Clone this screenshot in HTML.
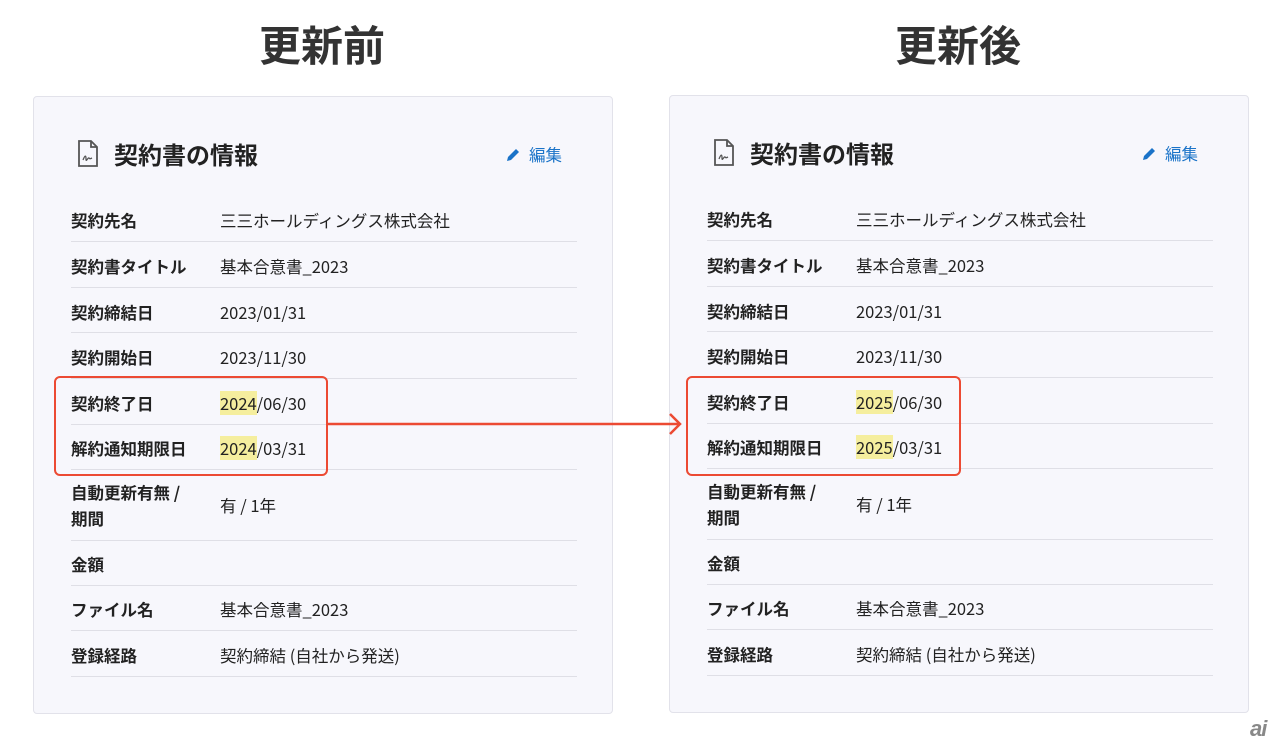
<!DOCTYPE html>
<html><head><meta charset="utf-8"><style>
*{margin:0;padding:0;box-sizing:border-box}
body{width:1280px;height:747px;background:#fff;position:relative;overflow:hidden;font-family:"Noto Sans CJK JP","Liberation Sans",sans-serif;color:#222}
.h{position:absolute;top:18px;font-size:42px;line-height:52px;font-weight:bold;color:#333;width:300px;text-align:center}
.p{position:absolute;width:580px;height:618px;background:#f7f7fc;border:1px solid #e2e2ea;border-radius:4px}
.ttl{position:absolute;left:80px;top:41px;font-size:24px;line-height:32px;font-weight:bold;color:#222}
.ico{position:absolute;left:43px;top:43px}
.ed{position:absolute;left:472px;top:46px;font-size:16.5px;line-height:22px;color:#1a73c8}
.ed svg{vertical-align:-1px;margin-right:9px}
.r{position:absolute;left:37px;width:506px;border-bottom:1px solid #dfdfe6;font-size:16.5px;line-height:22px}
.r .l{position:absolute;left:0;font-weight:bold}
.r .v{position:absolute;left:149px}
.hl{background:#f5ee9e}
.box{position:absolute;border:2px solid #ec4a33;border-radius:6px}
</style></head><body>
<div class="h" style="left:172px">更新前</div>
<div class="h" style="left:808px">更新後</div>

<div class="p" style="left:33px;top:96px">
<svg class="ico" width="22" height="28" viewBox="0 0 22 28"><path d="M2 1h12l6 6v19H2z" fill="none" stroke="#555" stroke-width="1.8"/><path d="M14 1v6h6" fill="none" stroke="#555" stroke-width="1.8"/><path d="M6 20c2-5 3-5 3-1s2-2 3-1 1 1 3 0" fill="none" stroke="#555" stroke-width="1.3"/></svg>
<div class="ttl">契約書の情報</div>
<div class="ed"><svg width="14" height="14" viewBox="0 0 14 14"><path d="M1 13l1-4 8-8 3 3-8 8z" fill="#1a73c8"/></svg>編集</div>
<div class="r" style="top:100px;height:45px"><span class="l" style="top:12px">契約先名</span><span class="v" style="top:12px">三三ホールディングス株式会社</span></div>
<div class="r" style="top:145px;height:46px"><span class="l" style="top:13px">契約書タイトル</span><span class="v" style="top:13px">基本合意書_2023</span></div>
<div class="r" style="top:191px;height:45px"><span class="l" style="top:13px">契約締結日</span><span class="v" style="top:13px">2023/01/31</span></div>
<div class="r" style="top:236px;height:46px"><span class="l" style="top:13px">契約開始日</span><span class="v" style="top:13px">2023/11/30</span></div>
<div class="r" style="top:282px;height:46px"><span class="l" style="top:13px">契約終了日</span><span class="v" style="top:13px"><span class="hl">2024</span>/06/30</span></div>
<div class="r" style="top:328px;height:45px"><span class="l" style="top:12px">解約通知期限日</span><span class="v" style="top:12px"><span class="hl">2024</span>/03/31</span></div>
<div class="r" style="top:373px;height:71px"><span class="l" style="top:9px;line-height:26px">自動更新有無 /<br>期間</span><span class="v" style="top:24px">有 / 1年</span></div>
<div class="r" style="top:444px;height:45px"><span class="l" style="top:12px">金額</span></div>
<div class="r" style="top:489px;height:45px"><span class="l" style="top:12px">ファイル名</span><span class="v" style="top:12px">基本合意書_2023</span></div>
<div class="r" style="top:534px;height:46px"><span class="l" style="top:13px">登録経路</span><span class="v" style="top:13px">契約締結 (自社から発送)</span></div>
</div>

<div class="p" style="left:669px;top:95px">
<svg class="ico" width="22" height="28" viewBox="0 0 22 28"><path d="M2 1h12l6 6v19H2z" fill="none" stroke="#555" stroke-width="1.8"/><path d="M14 1v6h6" fill="none" stroke="#555" stroke-width="1.8"/><path d="M6 20c2-5 3-5 3-1s2-2 3-1 1 1 3 0" fill="none" stroke="#555" stroke-width="1.3"/></svg>
<div class="ttl">契約書の情報</div>
<div class="ed"><svg width="14" height="14" viewBox="0 0 14 14"><path d="M1 13l1-4 8-8 3 3-8 8z" fill="#1a73c8"/></svg>編集</div>
<div class="r" style="top:100px;height:45px"><span class="l" style="top:12px">契約先名</span><span class="v" style="top:12px">三三ホールディングス株式会社</span></div>
<div class="r" style="top:145px;height:46px"><span class="l" style="top:13px">契約書タイトル</span><span class="v" style="top:13px">基本合意書_2023</span></div>
<div class="r" style="top:191px;height:45px"><span class="l" style="top:13px">契約締結日</span><span class="v" style="top:13px">2023/01/31</span></div>
<div class="r" style="top:236px;height:46px"><span class="l" style="top:13px">契約開始日</span><span class="v" style="top:13px">2023/11/30</span></div>
<div class="r" style="top:282px;height:46px"><span class="l" style="top:13px">契約終了日</span><span class="v" style="top:13px"><span class="hl">2025</span>/06/30</span></div>
<div class="r" style="top:328px;height:45px"><span class="l" style="top:12px">解約通知期限日</span><span class="v" style="top:12px"><span class="hl">2025</span>/03/31</span></div>
<div class="r" style="top:373px;height:71px"><span class="l" style="top:9px;line-height:26px">自動更新有無 /<br>期間</span><span class="v" style="top:24px">有 / 1年</span></div>
<div class="r" style="top:444px;height:45px"><span class="l" style="top:12px">金額</span></div>
<div class="r" style="top:489px;height:45px"><span class="l" style="top:12px">ファイル名</span><span class="v" style="top:12px">基本合意書_2023</span></div>
<div class="r" style="top:534px;height:46px"><span class="l" style="top:13px">登録経路</span><span class="v" style="top:13px">契約締結 (自社から発送)</span></div>
</div>

<div class="box" style="left:54px;top:376px;width:274px;height:100px"></div>
<div class="box" style="left:686px;top:376px;width:275px;height:100px"></div>
<svg style="position:absolute;left:326px;top:410px" width="362" height="30"><path d="M0 14h354M344 4l10 10-10 10" fill="none" stroke="#ec4a33" stroke-width="2.5"/></svg>
<div style="position:absolute;left:1250px;top:716px;font-family:'Liberation Sans',sans-serif;font-size:22px;font-style:italic;font-weight:bold;color:#888;letter-spacing:-1px">ai</div>
</body></html>
